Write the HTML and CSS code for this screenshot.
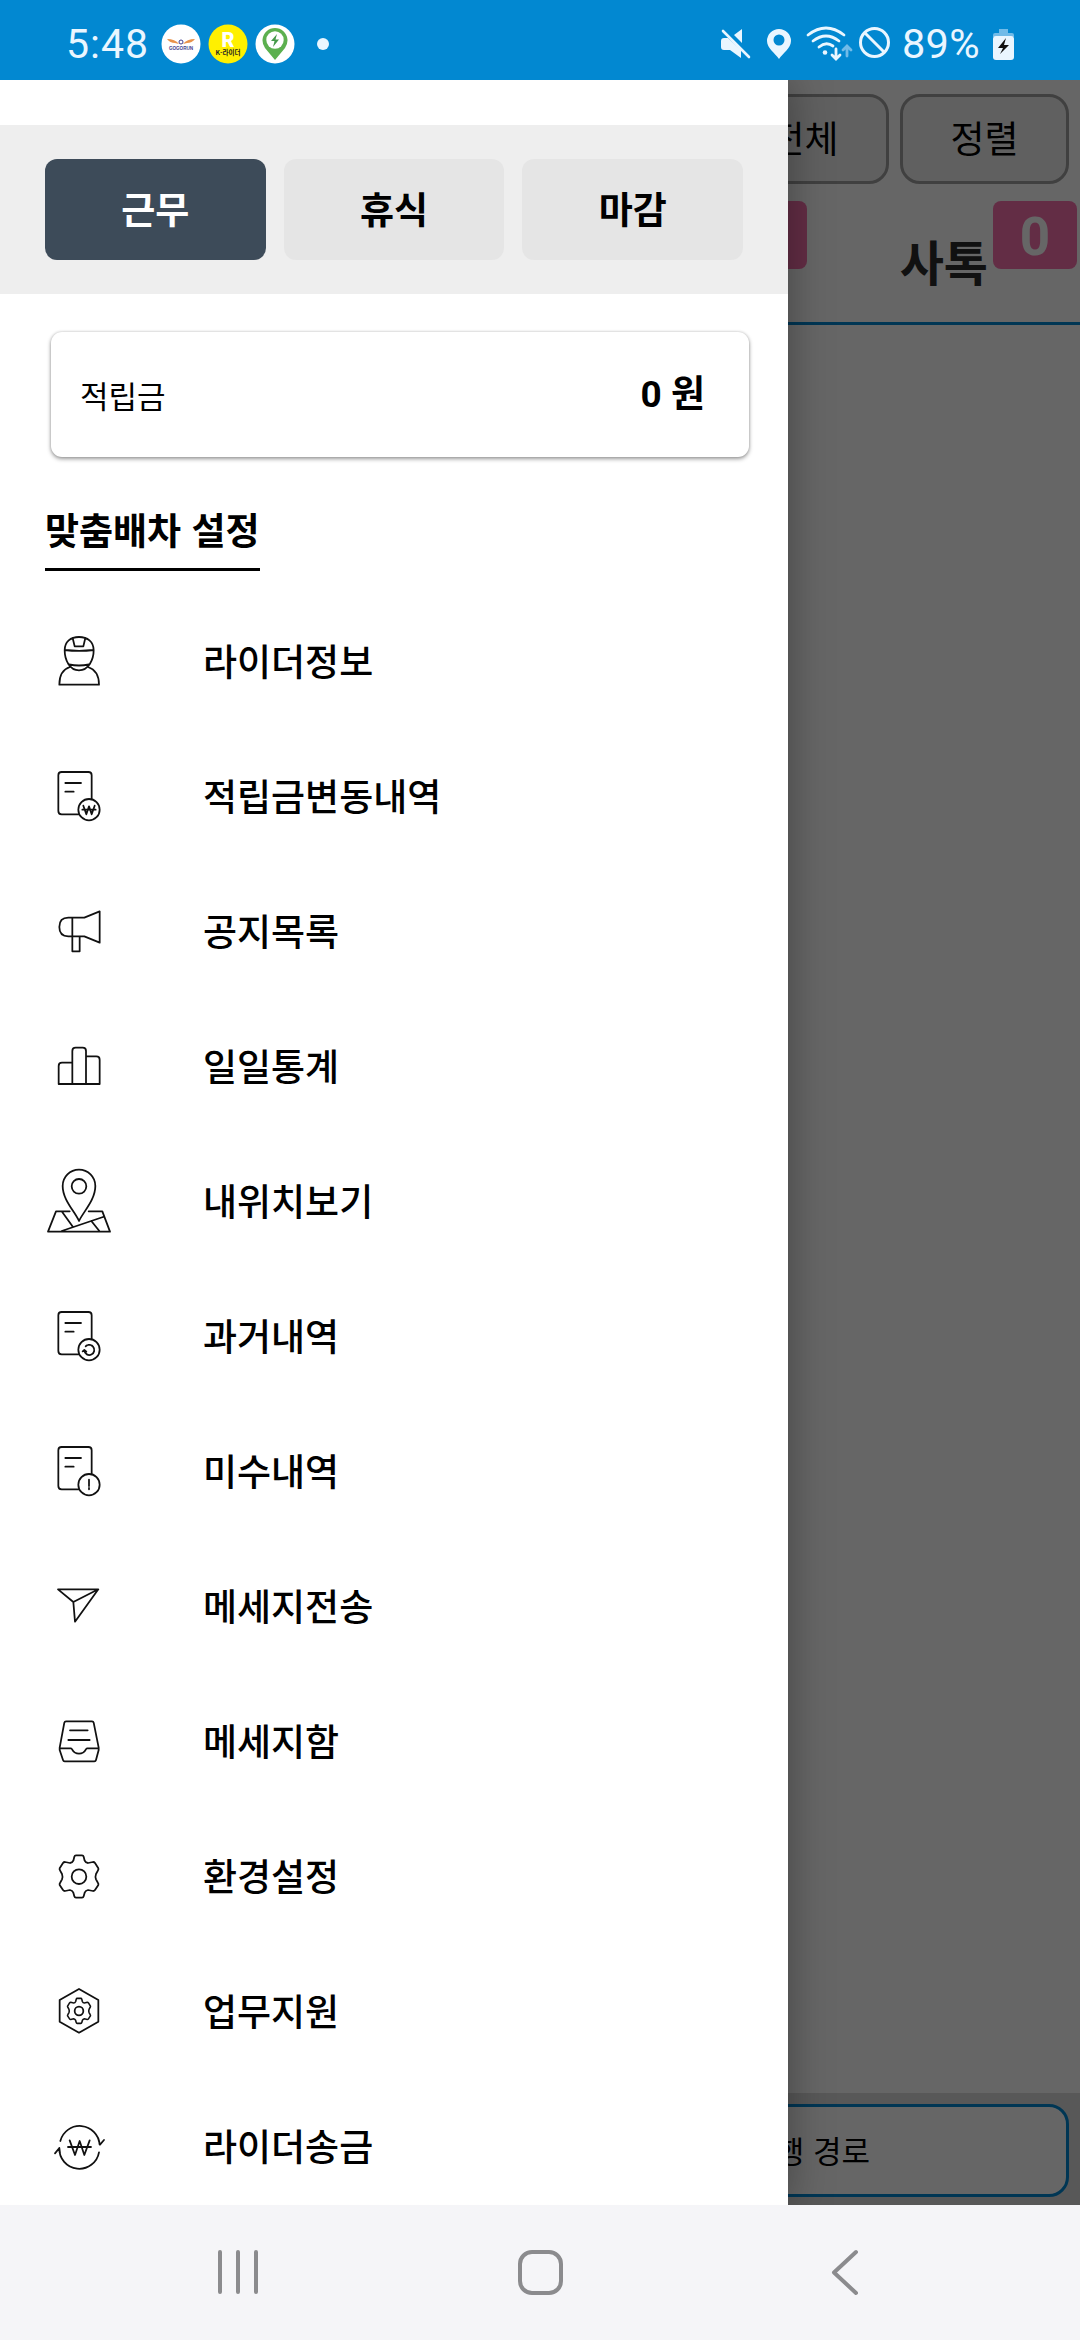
FILE: index.html
```html
<!DOCTYPE html>
<html lang="ko">
<head>
<meta charset="utf-8">
<title>라이더</title>
<link rel="stylesheet" href="styles.css">
</head>
<body>
<svg class="defs" width="0" height="0">
  <defs>
    <g id="doc"><path d="M146 208H95Q85 208 85 198V91Q85 81 95 81H175Q185 81 185 91V162M106 114H153M106 140H131"/><circle cx="177" cy="194" r="32"/></g>
    <path id="gear" d="M138 91H156Q160 91 161 95L164 107Q167 114 174 114L189 111Q193 111 195 114L205 130Q206 133 204 136L198 147Q195 155 198 163L204 174Q206 177 205 180L195 195Q193 198 189 198L174 195Q167 196 164 203L161 214Q160 218 156 218H138Q134 218 133 214L130 203Q127 196 120 195L105 198Q101 198 99 195L89 180Q88 177 90 174L96 163Q99 155 96 147L90 136Q88 133 89 130L99 114Q101 111 105 111L120 114Q127 114 130 107L133 95Q134 91 138 91Z"/>
  </defs>
</svg>

<header class="status">
  <span class="clock">5:48</span>
  <svg class="noti" viewBox="0 0 40 40"><circle cx="20" cy="20" r="19.5" fill="#fff"/><path d="M6 15Q14 15 18 20L14 19Q9 19 6 15ZM34 15Q26 15 22 20L26 19Q31 19 34 15Z" fill="#e8924a"/><circle cx="20" cy="18" r="2" fill="none" stroke="#3d3c8c"/><text x="20" y="26" class="logo-a" text-anchor="middle">GOGORUN</text></svg>
  <svg class="noti" viewBox="0 0 40 40"><circle cx="20" cy="20" r="19.5" fill="#fff000"/><text x="20" y="23" class="logo-r" text-anchor="middle">R</text><text x="20" y="31" class="logo-k" text-anchor="middle">K-라이더</text></svg>
  <svg class="noti" viewBox="0 0 40 40"><circle cx="20" cy="20" r="19.5" fill="#fff"/><path d="M20 36L10 24A12.5 12.5 0 1 1 30 24Z" fill="#5cb04f"/><circle cx="20" cy="16" r="8.7" fill="#fff"/><path d="M22 10L16 17H19.500L18 23L24 15.500H20.500Z" fill="#459a4a"/></svg>
  <i class="more"></i>
  <svg class="sys" width="300" height="40" viewBox="718 22 300 40">
    <g fill="#eaf6ff">
      <path d="M720 41Q720 38 723 38H727L740 50V58L729 50H723Q720 50 720 47ZM733 35L741 29V43Z"/><path d="M722 31L748 57" stroke="#eaf6ff" stroke-width="2.600" stroke-linecap="round"/>
      <path fill-rule="evenodd" d="M778 59C774 53 766 48 766 41A12 12 0 0 1 790 41C790 48 782 53 778 59ZM778 34.500A5.500 5.500 0 1 0 778 45.500A5.500 5.500 0 0 0 778 34.500Z"/>
      <circle cx="824" cy="52.500" r="2.300"/>
    </g>
    <g fill="none" stroke="#eaf6ff" stroke-width="2.800" stroke-linecap="round">
      <path d="M807 35Q825 21 843 35M812 41Q825 31 838 41M818 47Q825 41 832 46M835 49V58M831 55L835 59L839 55"/>
      <path d="M846 56V47M842 50L846 46L850 50" stroke="#71bbe8"/>
      <circle cx="873.500" cy="42.500" r="14" stroke-width="3"/><path d="M864 33L883 52" stroke-width="3"/>
    </g>
    <text x="901" y="58" class="pct">89%</text>
    <path d="M992 37V35Q992 33 994 33H998V29H1007V33H1011Q1013 33 1013 35V37Z" fill="#71bbe8"/>
    <rect x="992" y="36" width="21" height="24" rx="3" fill="#eaf6ff"/><path d="M1005 38L997 48H1002L999 54L1008 45H1003Z" fill="#111"/>
  </svg>
</header>

<main class="app">
  <section class="page">
    <div class="filters"><span class="pill">전체</span><span class="pill">정렬</span></div>
    <div class="tabs"><div class="tab"><b class="badge">0</b></div><div class="tab"><span class="tab-name">사톡</span><b class="badge">0</b></div></div>
    <div class="orders"></div>
    <div class="bottom"><span class="route">운행 경로</span></div>
  </section>
  <div class="scrim"></div>

  <aside class="drawer">
    <div class="modes"><span class="mode on">근무</span><span class="mode">휴식</span><span class="mode">마감</span></div>
    <div class="card"><span class="card-label">적립금</span><b class="card-sum">0 원</b></div>
    <h2 class="heading">맞춤배차 설정</h2>
    <nav class="menu">
      <a class="item"><svg class="ico" viewBox="27 36 240 240"><path d="M104 121C104 95 122 81 147 81S191 95 191 121C191 150 175 181 147 181S104 150 104 121ZM104 120Q147 125 191 120M128 84L134 109H160L166 84M117 163Q147 170 177 163M120 171C98 178 88 195 88 224H207C207 195 195 178 174 171"/></svg>라이더정보</a>
      <a class="item"><svg class="ico" viewBox="27 36 240 240"><use href="#doc"/><path class="bold" d="M160 182L169 208L177 184L185 208L194 182M157 194H197"/></svg>적립금변동내역</a>
      <a class="item"><svg class="ico" viewBox="27 36 240 240"><path d="M163 113L209 94V188L163 169H115C97 169 88 158 88 141S97 113 115 113ZM127 113V214H149V170"/></svg>공지목록</a>
      <a class="item"><svg class="ico" viewBox="27 36 240 240"><path d="M127 143H96Q86 143 86 153V207H209V134Q209 124 199 124H168M127 207V108Q127 98 137 98H158Q168 98 168 108V207"/></svg>일일통계</a>
      <a class="item"><svg class="ico" viewBox="27 36 240 240"><path d="M147 213C135 185 98 150 98 108A49 49 0 0 1 196 108C196 150 160 185 147 213ZM119 184H78L54 245H240L217 184H176M95 184L129 231M95 243L219 201M184 213L208 243"/><circle cx="147" cy="109" r="22"/></svg>내위치보기</a>
      <a class="item"><svg class="ico" viewBox="27 36 240 240"><use href="#doc"/><path d="M189 185A15 15 0 1 1 163 197M158 199L163 195L169 200"/><path d="M167 184A15 15 0 0 1 187 183" stroke-dasharray="5 4"/></svg>과거내역</a>
      <a class="item"><svg class="ico" viewBox="27 36 240 240"><use href="#doc"/><path d="M177 179V198M177 204V208"/></svg>미수내역</a>
      <a class="item"><svg class="ico" viewBox="27 36 240 240"><path d="M84 103H205L135 200L130 141ZM130 141L205 103"/></svg>메세지전송</a>
      <a class="item"><svg class="ico" viewBox="27 36 240 240"><path d="M108 94H186Q190 94 191 98L206 173V180L198 210Q197 214 193 214H104Q100 214 99 210L89 180V173L103 98Q104 94 108 94ZM89 175H123C128 175 126 191 147 191S166 175 171 175H206M120 121H173M115 150H179"/></svg>메세지함</a>
      <a class="item"><svg class="ico" viewBox="27 36 240 240"><use href="#gear"/><circle cx="147" cy="155" r="22"/></svg>환경설정</a>
      <a class="item"><svg class="ico" viewBox="27 36 240 240"><path d="M147 87L205 120V185L147 218L89 185V120Z"/><use href="#gear" class="small" transform="translate(60.300 61.500) scale(.59)"/><circle cx="147" cy="153" r="13"/></svg>업무지원</a>
      <a class="item"><svg class="ico" viewBox="27 36 240 240"><path d="M91 138A60 60 0 0 1 209 149M207 172A60 60 0 0 1 88 159M206 136L210 149L222 135M75 175L88 159L90 174M119 136L135 180L149 138L163 180L179 136M114 156H183"/></svg>라이더송금</a>
    </nav>
  </aside>
</main>

<footer class="navbar">
  <svg width="48" height="48" viewBox="0 0 48 48"><path d="M6 4V44M24 4V44M42 4V44"/></svg>
  <svg width="48" height="48" viewBox="0 0 48 48"><rect x="4" y="4" width="41" height="41" rx="12"/></svg>
  <svg width="48" height="48" viewBox="0 0 48 48"><path d="M38 4L16 24.500L38 45"/></svg>
</footer>
</body>
</html>
```
FILE: styles.css
```css
* { box-sizing: border-box; }
body {
  margin: 0;
  width: 1080px;
  height: 2340px;
  display: grid;
  grid-template-rows: 80px 1fr 135px;
  overflow: hidden;
  font-family: "Noto Sans CJK KR", sans-serif;
  color: #000;
}
.defs { position: absolute; }

.status { background: #0288d1; display: flex; align-items: center; padding: 8px 61px 0 66px; }
.clock, .pct { font-family: Roboto, sans-serif; font-weight: 400; color: #eaf6ff; fill: #eaf6ff; }
.clock { width: 95px; font-size: 41px; letter-spacing: 1px; }
.pct { font-size: 41.500px; letter-spacing: .3px; }
.noti { width: 40px; height: 40px; margin-right: 7px; }
.more { width: 12px; height: 12px; border-radius: 50%; background: #eaf6ff; margin-left: 15px; }
.sys { margin-left: auto; margin-top: -4px; overflow: visible; }
.logo-a { font: bold 4.600px "Liberation Sans", sans-serif; fill: #3d3c8c; }
.logo-r { font: 900 20px Roboto, sans-serif; fill: #fff; }
.logo-k { font: bold 6.500px "Noto Sans CJK KR", sans-serif; fill: #222; }

.app { position: relative; overflow: hidden; }
.page { height: 100%; display: flex; flex-direction: column; background: #fff; }
.filters { display: flex; justify-content: flex-end; gap: 11px; padding: 14px 11px 0 0; }
.pill {
  width: 169px; height: 90px; padding-bottom: 4px;
  display: flex; align-items: center; justify-content: center;
  border: 3px solid #a0a0a0; border-radius: 20px; background: #f0f0f0;
  font-size: 37px;
}
.tabs { display: flex; justify-content: flex-end; height: 141px; padding: 17px 3px 0 0; border-bottom: 3px solid #0288d1; }
.tab { width: 270px; display: flex; justify-content: flex-end; align-items: flex-start; gap: 5px; }
.tab-name { font-size: 48px; font-weight: 700; line-height: 118px; color: #2b2b2b; }
.badge {
  width: 84px; height: 68px; border-radius: 8px; background: #f870ad; color: #fff;
  font: 700 53px/73px Roboto, sans-serif; text-align: center;
}
.orders { flex: 1; }
.bottom { height: 112px; background: #dcdcdc; padding: 11px 11px 8px; display: flex; }
.route {
  flex: 1; margin-left: 528px; padding: 0 196px 2px 0;
  border: 3px solid #0288d1; border-radius: 20px; background: #fff;
  display: flex; align-items: center; justify-content: flex-end; font-size: 31px;
}
.scrim { position: absolute; inset: 0; background: rgba(0, 0, 0, .6); }

.drawer {
  position: absolute; left: 0; top: 0; bottom: 0; width: 788px;
  background: #fff; padding-top: 45px;
  box-shadow: 0 0 40px rgba(0, 0, 0, .35);
  display: flex; flex-direction: column; align-items: flex-start;
}
.drawer > * { flex-shrink: 0; }
.modes { width: 100%; height: 169px; background: #eee; padding: 34px 45px; display: flex; gap: 18px; }
.mode {
  flex: 1; display: flex; align-items: center; justify-content: center; padding-bottom: 3px;
  border-radius: 12px; background: #e5e5e5; font-size: 37px; font-weight: 700;
}
.mode.on { background: #3d4b59; color: #fff; }
.card {
  width: 698px; height: 125px; margin: 38px 0 0 51px; padding: 0 44px 0 29px;
  border-radius: 11px; background: #fff;
  box-shadow: 0 2px 4px rgba(0, 0, 0, .38), 0 0 3px rgba(0, 0, 0, .18);
  display: flex; align-items: center; justify-content: space-between;
}
.card-label { font-size: 31px; }
.card-sum { font-family: Roboto, "Noto Sans CJK KR", sans-serif; font-size: 37px; padding-bottom: 7px; }
.heading {
  margin: 46px 0 0 45px; height: 68px; border-bottom: 3px solid #000;
  font-size: 37px; line-height: 52px; font-weight: 700; white-space: nowrap;
}
.menu { margin-top: 23px; width: 100%; display: flex; flex-direction: column; }
.item { height: 135px; padding: 0 0 3px 39px; display: flex; align-items: center; gap: 84px; font-size: 37px; font-weight: 500; }
.ico { width: 80px; height: 80px; margin-top: 3px; fill: none; stroke: #111; stroke-width: 5.300; stroke-linejoin: round; stroke-linecap: round; }
.ico .small { stroke-width: 8; }

.navbar { background: #f5f5f8; display: flex; align-items: center; padding: 0 214px 2px; justify-content: space-between; }
.navbar svg { fill: none; stroke: #8b8b8e; stroke-width: 4; stroke-linecap: round; stroke-linejoin: round; }
```
